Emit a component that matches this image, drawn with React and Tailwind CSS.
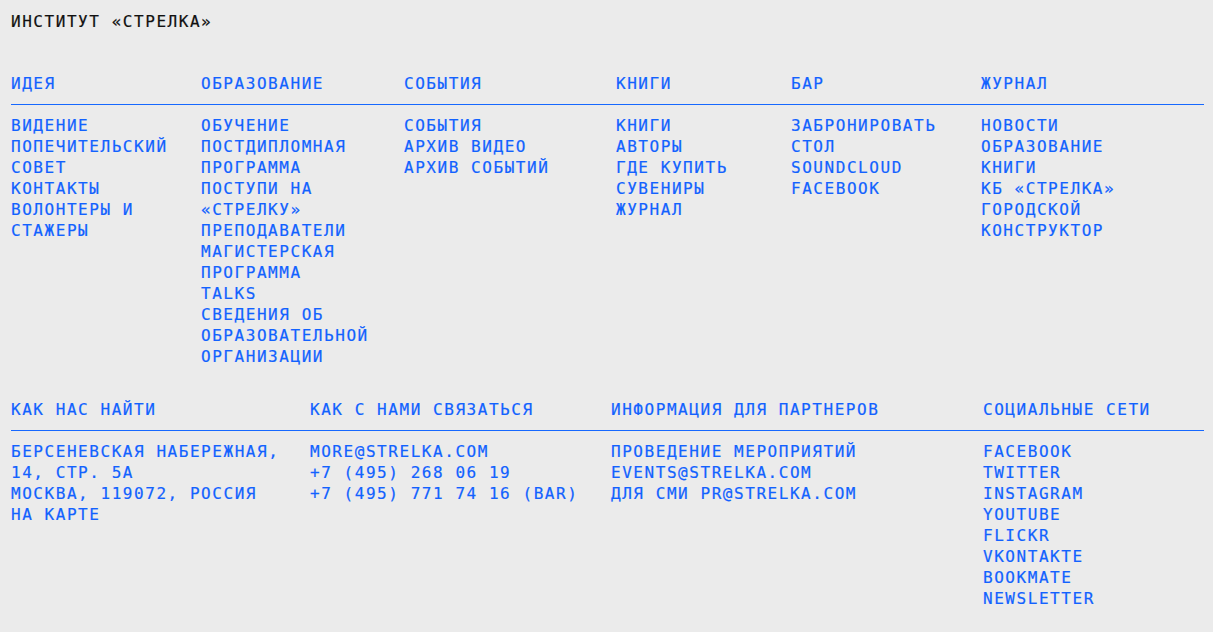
import React from 'react';

const nav = [
  { title: 'ИДЕЯ', items: ['ВИДЕНИЕ', 'ПОПЕЧИТЕЛЬСКИЙ СОВЕТ', 'КОНТАКТЫ', 'ВОЛОНТЕРЫ И СТАЖЕРЫ'] },
  {
    title: 'ОБРАЗОВАНИЕ',
    items: [
      'ОБУЧЕНИЕ',
      'ПОСТДИПЛОМНАЯ ПРОГРАММА',
      'ПОСТУПИ НА «СТРЕЛКУ»',
      'ПРЕПОДАВАТЕЛИ',
      'МАГИСТЕРСКАЯ ПРОГРАММА',
      'TALKS',
      'СВЕДЕНИЯ ОБ ОБРАЗОВАТЕЛЬНОЙ ОРГАНИЗАЦИИ',
    ],
  },
  { title: 'СОБЫТИЯ', items: ['СОБЫТИЯ', 'АРХИВ ВИДЕО', 'АРХИВ СОБЫТИЙ'] },
  { title: 'КНИГИ', items: ['КНИГИ', 'АВТОРЫ', 'ГДЕ КУПИТЬ', 'СУВЕНИРЫ', 'ЖУРНАЛ'] },
  { title: 'БАР', items: ['ЗАБРОНИРОВАТЬ СТОЛ', 'SOUNDCLOUD', 'FACEBOOK'] },
  {
    title: 'ЖУРНАЛ',
    items: ['НОВОСТИ', 'ОБРАЗОВАНИЕ', 'КНИГИ', 'КБ «СТРЕЛКА»', 'ГОРОДСКОЙ КОНСТРУКТОР'],
  },
];

const info = [
  {
    title: 'КАК НАС НАЙТИ',
    items: ['БЕРСЕНЕВСКАЯ НАБЕРЕЖНАЯ, 14, СТР. 5А', 'МОСКВА, 119072, РОССИЯ', 'НА КАРТЕ'],
  },
  {
    title: 'КАК С НАМИ СВЯЗАТЬСЯ',
    items: ['MORE@STRELKA.COM', '+7 (495) 268 06 19', '+7 (495) 771 74 16 (BAR)'],
  },
  {
    title: 'ИНФОРМАЦИЯ ДЛЯ ПАРТНЕРОВ',
    items: ['ПРОВЕДЕНИЕ МЕРОПРИЯТИЙ', 'EVENTS@STRELKA.COM', 'ДЛЯ СМИ PR@STRELKA.COM'],
  },
  {
    title: 'СОЦИАЛЬНЫЕ СЕТИ',
    items: ['FACEBOOK', 'TWITTER', 'INSTAGRAM', 'YOUTUBE', 'FLICKR', 'VKONTAKTE', 'BOOKMATE', 'NEWSLETTER'],
  },
];

function Section({ cols, data }) {
  return (
    <div>
      <div className={`grid ${cols} border-b border-[#1668ff] pb-[10px]`}>
        {data.map((c) => (
          <div key={c.title}>{c.title}</div>
        ))}
      </div>
      <div className={`grid ${cols} pt-[10px]`}>
        {data.map((c) => (
          <ul key={c.title} className="pr-2">
            {c.items.map((it, i) => (
              <li key={i}>
                <a href="#" className="hover:underline">{it}</a>
              </li>
            ))}
          </ul>
        ))}
      </div>
    </div>
  );
}

export default function App() {
  return (
    <div
      className="min-h-screen bg-[#ebebeb] px-[11px] pr-[9px] pt-[11px] text-[16px] leading-[21px] tracking-[1.55px] text-[#1262ff] [-webkit-text-stroke:0.2px_currentColor]"
      style={{ fontFamily: '"DejaVu Sans Mono", "Liberation Mono", monospace' }}
    >
      <div className="text-[#111]">ИНСТИТУТ «СТРЕЛКА»</div>

      <div className="mt-[41px]">
        <Section cols="grid-cols-[190px_203px_212px_175px_190px_1fr]" data={nav} />
      </div>

      <div className="mt-[32px]">
        <Section cols="grid-cols-[299px_301px_372px_1fr]" data={info} />
      </div>
    </div>
  );
}
